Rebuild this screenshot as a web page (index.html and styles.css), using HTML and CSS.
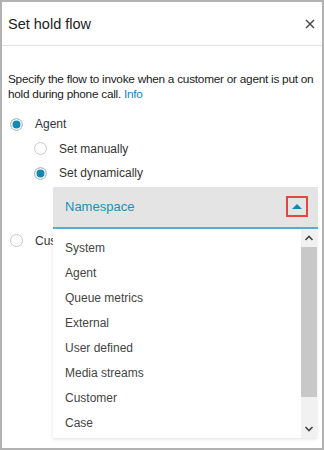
FILE: index.html
```html
<!DOCTYPE html>
<html lang="en">
<head>
    <meta charset="UTF-8">
    <meta name="viewport" content="width=device-width, initial-scale=1.0">
    <title>Set hold flow</title>
    <link rel="stylesheet" href="styles.css">
</head>
<body>
    <div class="modal">
        <!-- fejléc -->
        <div class="modal-header">
            <span class="modal-title">Set hold flow</span>
            <svg class="close" width="10" height="10" viewBox="0 0 10 10">
                <path d="M1 1 L9 9 M9 1 L1 9" stroke="#444" stroke-width="1.4" fill="none"/>
            </svg>
        </div>

        <div class="modal-body">
            <p class="desc">Specify the flow to invoke when a customer or agent is put on hold during phone call. <a href="#">Info</a></p>

            <div class="option">
                <span class="radio checked"></span>
                <span>Agent</span>
            </div>
            <div class="option sub">
                <span class="radio"></span>
                <span>Set manually</span>
            </div>
            <div class="option sub">
                <span class="radio checked"></span>
                <span>Set dynamically</span>
            </div>

            <!-- lenyíló lista -->
            <div class="select">
                <div class="select-trigger">
                    <span>Namespace</span>
                    <span class="caret-box"><span class="caret"></span></span>
                </div>
                <div class="menu">
                    <ul class="menu-list">
                        <li>System</li>
                        <li>Agent</li>
                        <li>Queue metrics</li>
                        <li>External</li>
                        <li>User defined</li>
                        <li>Media streams</li>
                        <li>Customer</li>
                        <li>Case</li>
                    </ul>
                    <div class="scrollbar">
                        <svg class="arrow" width="10" height="8" viewBox="0 0 10 8">
                            <path d="M1.5 6 L5 2.5 L8.5 6" stroke="#444" stroke-width="1.6" fill="none"/>
                        </svg>
                        <div class="thumb"></div>
                        <div class="track"></div>
                        <svg class="arrow" width="10" height="8" viewBox="0 0 10 8">
                            <path d="M1.5 2 L5 5.5 L8.5 2" stroke="#444" stroke-width="1.6" fill="none"/>
                        </svg>
                    </div>
                </div>
            </div>

            <div class="option">
                <span class="radio"></span>
                <span>Customer</span>
            </div>
        </div>
    </div>
</body>
</html>
```

FILE: styles.css
```css
* {
    box-sizing: border-box;
}
body {
    margin: 0;
    font-family: "Liberation Sans", Arial, sans-serif;
    color: #16191f;
}
.modal {
    width: 324px;
    height: 450px;
    border: 2px solid #b2b2b2;
    background: #fff;
    overflow: hidden;
}
.modal-header {
    height: 44px;
    border-bottom: 1px solid #e0e0e0;
    display: flex;
    align-items: center;
    justify-content: space-between;
    padding: 0 7px 0 6px;
}
.modal-title {
    font-size: 14.5px;
    color: #222;
}
.modal-body {
    padding: 26px 0 0 6px;
    font-size: 12px;
}
.desc {
    margin: 0 0 10px 0;
    line-height: 15px;
    font-size: 11.8px;
    letter-spacing: -0.25px;
    color: #222;
}
.desc a {
    color: #1a7fc1;
    text-decoration: none;
}

/* rádiógombok */
.option {
    display: flex;
    align-items: center;
    height: 24.5px;
    gap: 12px;
    padding-left: 2px;
    color: #333;
}
.option.sub {
    padding-left: 26px;
}
.radio {
    width: 13px;
    height: 13px;
    border: 1px solid #c8c8c8;
    border-radius: 50%;
    background: #fff;
}
.radio.checked {
    background: #1388b0;
    box-shadow: inset 0 0 0 1.5px #fff;
}

/* Namespace select */
.select {
    position: relative;
    margin: 1px 4px 0 45px;
}
.select-trigger {
    height: 42px;
    background: #e4e4e4;
    border-bottom: 2px solid #5ab0cf;
    display: flex;
    align-items: center;
    justify-content: space-between;
    padding: 0 10px 0 12px;
    color: #1a90b8;
    font-size: 13px;
}
.caret-box {
    width: 22px;
    height: 21px;
    border: 2px solid #e8453c;
    display: flex;
    align-items: center;
    justify-content: center;
}
.caret {
    width: 0;
    height: 0;
    border-left: 5px solid transparent;
    border-right: 5px solid transparent;
    border-bottom: 5px solid #1388b0;
}
.menu {
    position: absolute;
    top: 42px;
    left: 0;
    right: 1px;
    height: 209px;
    background: #fff;
    box-shadow: 0 1px 3px rgba(0, 0, 0, 0.12);
    display: flex;
    z-index: 2;
}
.menu-list {
    flex: 1;
    list-style: none;
    margin: 0;
    padding: 7px 0 0 12px;
    color: #444;
    font-size: 12px;
}
.menu-list li {
    height: 25px;
    line-height: 25px;
}
.scrollbar {
    width: 16px;
    background: #f1f1f1;
    display: flex;
    flex-direction: column;
    align-items: center;
}
.arrow {
    margin: 5px 0;
}
.thumb {
    width: 16px;
    height: 150px;
    background: #c8c8c8;
}
.track {
    flex: 1;
}
```
